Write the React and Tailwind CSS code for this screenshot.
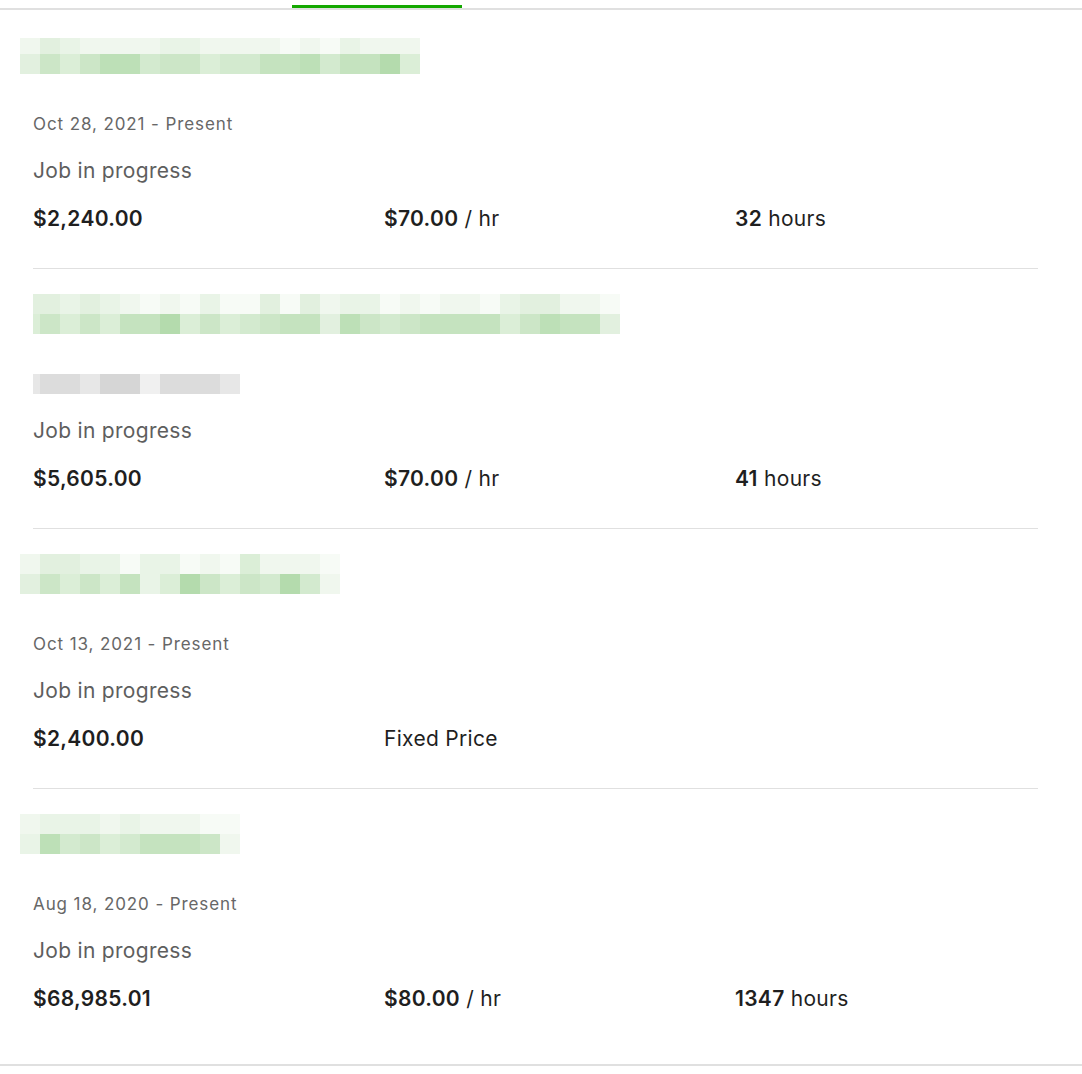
import React from 'react';

// Blurred (pixelated) shades, light to dark
const GREENS = [
  'bg-[#f7fbf6]', 'bg-[#f0f7ee]', 'bg-[#e9f4e7]', 'bg-[#e2f0df]', 'bg-[#dbeed7]',
  'bg-[#d3eacf]', 'bg-[#cce6c7]', 'bg-[#c5e3bf]', 'bg-[#bde0b7]', 'bg-[#b4dbad]'
];
const GRAYS = ['bg-[#f0f0f0]', 'bg-[#e7e7e7]', 'bg-[#dcdcdc]', 'bg-[#d6d6d6]'];

const JOBS = [
  {
    offset: true,
    title: ['13211112211110102111', '36468856645577857794'],
    date: 'Oct 28, 2021 - Present',
    amount: '$2,240.00',
    rate: '$70.00',
    hours: '32'
  },
  {
    offset: false,
    title: ['332321010200303122010110233110', '464647794645677386567777468773'],
    grayDate: '12213302221',
    amount: '$5,605.00',
    rate: '$70.00',
    hours: '41'
  },
  {
    offset: true,
    title: ['1332202201041110', '3646472496465951'],
    date: 'Oct 13, 2021 - Present',
    amount: '$2,400.00',
    fixed: true
  },
  {
    offset: true,
    title: ['12221211100', '28564577761'],
    date: 'Aug 18, 2020 - Present',
    amount: '$68,985.01',
    rate: '$80.00',
    hours: '1347'
  }
];

const MosaicRow = ({ levels, shades, partial, className }) => (
  <div className={`flex ${className}`}>
    {levels.split('').map((l, i) => (
      <div
        key={i}
        className={`${partial && i === 0 ? 'w-[7px]' : 'w-[20px]'} h-full ${shades[Number(l)]}`}
      />
    ))}
  </div>
);

const JobItem = ({ job, first, last }) => (
  <div
    className={`${first ? 'pt-[24px]' : 'pt-[25px]'} ${
      last ? 'pb-[53px]' : 'pb-[37px] border-b border-[#e0e0e0]'
    }`}
  >
    <div className={job.offset ? '-ml-[13px]' : ''}>
      <MosaicRow
        levels={job.title[0]}
        shades={GREENS}
        partial={!job.offset}
        className={first ? 'h-[16px] mt-[4px]' : 'h-[20px]'}
      />
      <MosaicRow levels={job.title[1]} shades={GREENS} partial={!job.offset} className="h-[20px]" />
    </div>

    {job.grayDate ? (
      <MosaicRow levels={job.grayDate} shades={GRAYS} partial className="h-[20px] mt-[40px]" />
    ) : (
      <p className="mt-[40px] text-[17px] leading-[20px] tracking-[0.9px] text-[#676767]">{job.date}</p>
    )}

    <p className="mt-[25px] text-[21px] leading-[24px] tracking-[0.3px] text-[#5e5e5e]">Job in progress</p>

    <div className="mt-[24px] grid grid-cols-[351px_351px_1fr] text-[21px] leading-[24px] tracking-[0.3px] text-[#1f1f1f]">
      <span className="font-semibold">{job.amount}</span>
      {job.fixed ? (
        <span>Fixed Price</span>
      ) : (
        <span>
          <span className="font-semibold">{job.rate}</span> / hr
        </span>
      )}
      {job.hours && (
        <span>
          <span className="font-semibold">{job.hours}</span> hours
        </span>
      )}
    </div>
  </div>
);

const App = () => {
  return (
    <div className="w-[1082px] min-h-[1074px] bg-white font-['Inter','Noto_Sans',sans-serif]">
      {/* Tabs underline */}
      <div className="relative h-[10px] border-b-2 border-[#e0e0e0]">
        <div className="absolute left-[292px] top-[5px] w-[170px] h-[3px] bg-[#14a800]" />
      </div>

      <div className="border-b-2 border-[#e0e0e0]">
        <div className="ml-[33px] w-[1005px]">
          {JOBS.map((job, i) => (
            <JobItem key={i} job={job} first={i === 0} last={i === JOBS.length - 1} />
          ))}
        </div>
      </div>
    </div>
  );
};

export default App;
